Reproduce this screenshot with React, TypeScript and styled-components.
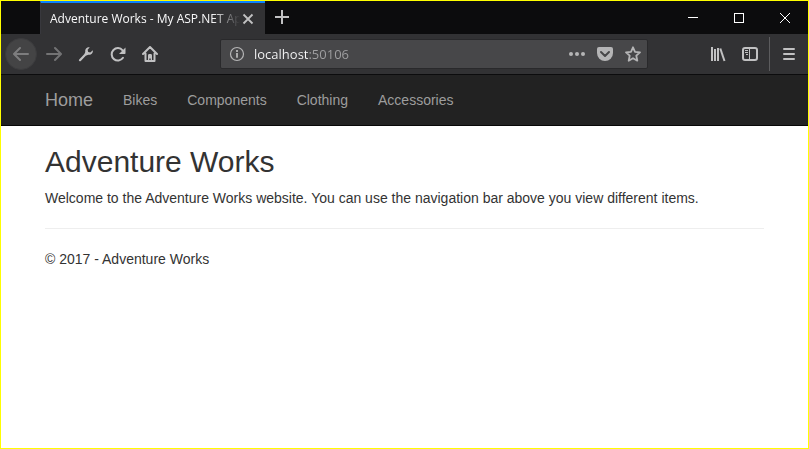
import React from "react";
import styled, { createGlobalStyle } from "styled-components";

const GlobalStyle = createGlobalStyle`
  *, *::before, *::after { box-sizing: border-box; }
  body { margin: 0; background: #fff; }
`;

const BrowserWindow = styled.div`
  display: flex;
  flex-direction: column;
  min-height: 100vh;
  border: 1px solid #ff0;
  background: #fff;
`;

const TabStrip = styled.header`
  display: flex;
  height: 33px;
  padding-left: 39px;
  background: #0c0c0d;
`;

const Tab = styled.div`
  display: flex;
  align-items: center;
  width: 225px;
  padding: 0 9px;
  border-top: 2px solid #0a84ff;
  border-left: 1px solid #38383d;
  background: #323234;
`;

const TabTitle = styled.span`
  flex: 1;
  min-width: 0;
  white-space: nowrap;
  font: 12px/16px "Open Sans", sans-serif;
  color: #f9f9fa;
  mask-image: linear-gradient(to left, transparent, #000 28px);
`;

const IconButton = styled.button<{ $width?: number; $color?: string }>`
  display: flex;
  flex: none;
  align-items: center;
  justify-content: center;
  width: ${(p) => p.$width ?? 32}px;
  height: 32px;
  padding: 0;
  border: 0;
  background: none;
  color: ${(p) => p.$color ?? "#c1c1c2"};
`;

const BackButton = styled(IconButton)`
  margin-right: 1px;
  border: 1px solid #3c3c3e;
  border-radius: 50%;
  background: #444445;
`;

const WindowControls = styled.div`
  display: flex;
  margin-left: auto;
`;

const Toolbar = styled.div`
  display: flex;
  align-items: center;
  height: 41px;
  padding: 0 3px 0 4px;
  border-bottom: 1px solid #0c0c0d;
  background: #323234;
`;

const AddressBar = styled.form`
  display: flex;
  flex: 1;
  align-items: center;
  min-width: 0;
  height: 30px;
  margin: 0 54px;
  border: 1px solid #29292b;
  border-radius: 2px;
  background: #474749;
`;

const AddressInput = styled.input`
  flex: 1;
  min-width: 0;
  height: 28px;
  padding: 0 0 0 1px;
  border: 0;
  outline: 0;
  font: 13px/28px "Open Sans", sans-serif;
  color: transparent;
  background: linear-gradient(to right, #f9f9fa 56px, #a0a0a2 56px);
  background-clip: text;
  -webkit-background-clip: text;
`;

const Divider = styled.span`
  width: 1px;
  height: 34px;
  margin: 0 3px;
  background: #5c5c5e;
`;

const NavBar = styled.nav`
  display: flex;
  align-items: center;
  height: 51px;
  padding: 0 29px;
  border-bottom: 1px solid #080808;
  background: #222;
`;

const NavLink = styled.a<{ $brand?: boolean }>`
  padding: 15px;
  font: ${(p) => (p.$brand ? 18 : 14)}px/20px "Liberation Sans", Arial, sans-serif;
  color: #9d9d9d;
  text-decoration: none;
`;

const Content = styled.main`
  padding: 19px 44px;
  font: 14px/20px "Liberation Sans", Arial, sans-serif;
  color: #333;
`;

const Heading = styled.h2`
  margin: 0 0 10px;
  font-size: 30px;
  font-weight: 400;
  line-height: 33px;
`;

const Text = styled.p`
  margin: 0;
`;

const Rule = styled.hr`
  margin: 20px 0;
  border: 0;
  border-top: 1px solid #eee;
`;

const IconSvg = styled.svg`
  display: block;
`;

function Icon(props: React.SVGProps<SVGSVGElement>) {
  return (
    <IconSvg
      width={16}
      height={16}
      viewBox="0 0 16 16"
      fill="none"
      stroke="currentColor"
      aria-hidden
      {...(props as object)}
    />
  );
}

const navItems = ["Bikes", "Components", "Clothing", "Accessories"];

export default function App() {
  return (
    <BrowserWindow>
      <GlobalStyle />
      <TabStrip>
        <Tab>
          <TabTitle>Adventure Works - My ASP.NET Ap</TabTitle>
          <IconButton $width={16} aria-label="Close tab">
            <Icon strokeWidth={1.8}><path d="M3.5 3.5l9 9m0-9l-9 9" /></Icon>
          </IconButton>
        </Tab>
        <IconButton $width={34} aria-label="New tab">
          <Icon strokeWidth={2}><path d="M8 1v14M1 8h14" /></Icon>
        </IconButton>
        <WindowControls>
          <IconButton $width={46} $color="#fff" aria-label="Minimize">
            <Icon shapeRendering="crispEdges"><path d="M3 8.5h10" /></Icon>
          </IconButton>
          <IconButton $width={46} $color="#fff" aria-label="Maximize">
            <Icon shapeRendering="crispEdges"><path d="M3.5 4.5h9v9h-9z" /></Icon>
          </IconButton>
          <IconButton $width={46} $color="#fff" aria-label="Close window">
            <Icon><path d="M3 4l10 10M13 4L3 14" /></Icon>
          </IconButton>
        </WindowControls>
      </TabStrip>

      <Toolbar>
        <BackButton $color="#7d7d7e" aria-label="Back">
          <Icon strokeWidth={2} strokeLinecap="round" strokeLinejoin="round"><path d="M15 8H1.5M7 2L1 8l6 6" /></Icon>
        </BackButton>
        <IconButton $color="#737374" aria-label="Forward">
          <Icon strokeWidth={2} strokeLinecap="round" strokeLinejoin="round"><path d="M1 8h13.5M9 2l6 6-6 6" /></Icon>
        </IconButton>
        <IconButton aria-label="Developer tools">
          <Icon>
            <path d="M2 14.2L8.4 7.4" strokeWidth={2.2} strokeLinecap="round" />
            <path fill="currentColor" stroke="none" d="M11.8 1.2C9 .8 6.8 3 7.3 5.7L6.6 8l1.6 1.5 2.2-.7c2.7.5 4.9-1.8 4.4-4.6L12.3 6.5 10.2 6l-.6-2.2z" />
          </Icon>
        </IconButton>
        <IconButton aria-label="Reload">
          <Icon strokeWidth={2}>
            <path d="M13 11.8A6.2 6.2 0 1 1 12.6 4.3" strokeLinecap="round" />
            <path fill="currentColor" stroke="none" d="M15.5 1.5v5.8c0 .4-.3.7-.7.7H9z" />
          </Icon>
        </IconButton>
        <IconButton aria-label="Home">
          <Icon strokeWidth={2} strokeLinejoin="round" strokeLinecap="round">
            <path d="M1 8l7-7 7 7M3.5 7.5V15h9V7.5" />
            <path fill="currentColor" stroke="none" d="M6 15V9.5C6 8.7 6.5 8 7.3 8h1.4c.8 0 1.3.7 1.3 1.5V15H8.7v-2.5H7.3V15z" />
          </Icon>
        </IconButton>

        <AddressBar onSubmit={(e) => e.preventDefault()}>
          <IconButton type="button" $color="#b5b5b6" aria-label="Site information">
            <Icon strokeWidth={1.2}>
              <circle cx="8" cy="8" r="6.5" />
              <path d="M8 7v4.7M8 4v2" strokeWidth={1.8} />
            </Icon>
          </IconButton>
          <AddressInput aria-label="Address" defaultValue="localhost:50106" spellCheck={false} />
          <IconButton $width={28} $color="#b5b5b6" type="button" aria-label="Page actions">
            <Icon fill="currentColor" stroke="none">
              <circle cx="2" cy="8" r="2" /><circle cx="8" cy="8" r="2" /><circle cx="14" cy="8" r="2" />
            </Icon>
          </IconButton>
          <IconButton $width={28} $color="#b5b5b6" type="button" aria-label="Save to Pocket">
            <Icon>
              <path fill="currentColor" stroke="none" d="M2 1h12a2 2 0 0 1 2 2v4a8 8 0 0 1-16 0V3a2 2 0 0 1 2-2z" />
              <path d="M4 6l4 4 4-4" stroke="#474749" strokeWidth={2} strokeLinecap="round" strokeLinejoin="round" />
            </Icon>
          </IconButton>
          <IconButton $width={28} $color="#b5b5b6" type="button" aria-label="Bookmark this page">
            <Icon strokeWidth={1.8} strokeLinejoin="round">
              <path d="M8 1.3l2 4.5 5 .5-3.7 3.4 1 5L8 12.2l-4.3 2.5 1-5L1 6.3l5-.5z" />
            </Icon>
          </IconButton>
        </AddressBar>

        <IconButton aria-label="Library">
          <Icon strokeWidth={2}><path d="M2 1v14M5 3v12M8 2v13" /><path d="M10.3 2.5L14.5 15" /></Icon>
        </IconButton>
        <IconButton aria-label="Sidebars">
          <Icon strokeWidth={2}>
            <rect x="1" y="2" width="14" height="12" rx="2" />
            <path d="M7.5 2v12" strokeWidth={1} />
            <path d="M3 4.5h3M3 6.5h3M4 8.5h2" strokeWidth={1} />
          </Icon>
        </IconButton>
        <Divider />
        <IconButton aria-label="Open menu">
          <Icon strokeWidth={2} strokeLinecap="round"><path d="M3 3h10M3 8h10M3 13h10" /></Icon>
        </IconButton>
      </Toolbar>

      <NavBar>
        <NavLink $brand href="#home">Home</NavLink>
        {navItems.map((item) => (
          <NavLink key={item} href={`#${item.toLowerCase()}`}>{item}</NavLink>
        ))}
      </NavBar>

      <Content>
        <Heading>Adventure Works</Heading>
        <Text>Welcome to the Adventure Works website. You can use the navigation bar above you view different items.</Text>
        <Rule />
        <footer>
          <Text>© 2017 - Adventure Works</Text>
        </footer>
      </Content>
    </BrowserWindow>
  );
}
